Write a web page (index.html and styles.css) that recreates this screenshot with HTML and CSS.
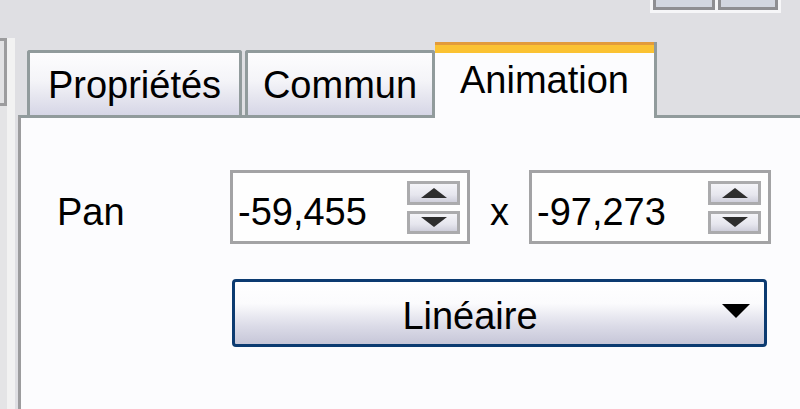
FILE: index.html
```html
<!DOCTYPE html>
<html lang="fr">
<head>
<meta charset="utf-8">
<title>Animation</title>
<link rel="stylesheet" href="styles.css">
</head>
<body>
<div class="top">
  <div class="winbtns">
    <div class="winbtn"></div>
    <div class="winbtn"></div>
  </div>
</div>
<div class="workspace">
  <div class="gutter">
    <div class="sidebox"></div>
  </div>
  <div class="tabpane">
    <div class="tabs">
      <div class="tab tab-first">Propriétés</div>
      <div class="tab tab-second">Commun</div>
      <div class="tab tab-active">Animation</div>
    </div>
    <div class="panel">
      <div class="row">
        <div class="label">Pan</div>
        <div class="spinbox">
          <span class="value">-59,455</span>
          <div class="spin">
            <div class="spinbtn"><svg width="26" height="10" viewBox="0 0 26 10"><path d="M13 0 L26 10 L0 10 Z" fill="#2e2e2e"/></svg></div>
            <div class="spinbtn"><svg width="26" height="10" viewBox="0 0 26 10"><path d="M0 0 L26 0 L13 10 Z" fill="#2e2e2e"/></svg></div>
          </div>
        </div>
        <div class="times">x</div>
        <div class="spinbox spinbox-wide">
          <span class="value">-97,273</span>
          <div class="spin">
            <div class="spinbtn"><svg width="26" height="10" viewBox="0 0 26 10"><path d="M13 0 L26 10 L0 10 Z" fill="#2e2e2e"/></svg></div>
            <div class="spinbtn"><svg width="26" height="10" viewBox="0 0 26 10"><path d="M0 0 L26 0 L13 10 Z" fill="#2e2e2e"/></svg></div>
          </div>
        </div>
      </div>
      <div class="select">
        <span class="select-text">Linéaire</span>
        <span class="select-arrow"><svg width="28" height="14" viewBox="0 0 28 14"><path d="M0 0 L28 0 L14 14 Z" fill="#000"/></svg></span>
      </div>
    </div>
  </div>
</div>
</body>
</html>
```

FILE: styles.css
```css
html, body {
  margin: 0;
  padding: 0;
}
body {
  width: 800px;
  height: 409px;
  overflow: hidden;
  background: #dfdfe3;
  font-family: "Liberation Sans", Arial, sans-serif;
  font-size: 38px;
  color: #000;
  display: flex;
  flex-direction: column;
}
.top {
  height: 38px;
  display: flex;
  justify-content: flex-end;
  align-items: flex-start;
  padding-right: 19px;
}
.winbtns {
  margin-top: -4px;
  display: flex;
  gap: 3px;
  background: #f6f6f8;
  padding: 0 3px 3px 3px;
}
.winbtn {
  width: 56px;
  height: 11px;
  background: #d2d6e0;
  border: 3px solid #8e8e92;
  border-top: none;
}
.winbtn + .winbtn {
  width: 54px;
}
.workspace {
  flex: 1;
  display: flex;
}
.gutter {
  width: 18px;
  display: flex;
  flex-direction: column;
  background: linear-gradient(90deg, #e4e4e6 0, #e4e4e6 7px, #f2f2f2 7px, #f2f2f2 15px, #dfdfe3 15px);
}
.sidebox {
  width: 4px;
  height: 62px;
  border: 3px solid #9c9c9e;
  border-left: none;
  background: #e2e2e4;
}
.tabpane {
  flex: 1;
  display: flex;
  flex-direction: column;
  padding-top: 4px;
}
.tabs {
  display: flex;
  align-items: flex-end;
  padding-left: 9px;
  height: 73px;
  position: relative;
  z-index: 1;
}
.tab {
  box-sizing: border-box;
  height: 65px;
  border: 3px solid #919b9c;
  border-bottom: none;
  border-radius: 3px 3px 0 0;
  background: linear-gradient(180deg, #fdfdfe 0%, #f4f4f8 45%, #d6d6e6 100%);
  text-align: center;
  line-height: 46px;
  padding-top: 9px;
  white-space: nowrap;
}
.tab-first {
  width: 215px;
}
.tab-second {
  width: 190px;
  margin-left: 3px;
}
.tab-active {
  width: 222px;
  height: 76px;
  margin-bottom: -3px;
  border: none;
  border-right: 3px solid #919b9c;
  border-radius: 0;
  background: #fcfcfe;
  box-shadow: inset 0 3px 0 #e39b3a, inset 0 11px 0 #fbc232;
  padding-top: 15px;
}
.panel {
  flex: 1;
  background: #fcfcfe;
  border-top: 3px solid #919b9c;
  border-left: 3px solid #9c9c9e;
  padding: 52px 0 0 36px;
  display: flex;
  flex-direction: column;
}
.row {
  display: flex;
  align-items: flex-start;
}
.label {
  width: 173px;
  line-height: 46px;
  padding-top: 19px;
}
.spinbox {
  box-sizing: border-box;
  width: 240px;
  height: 74px;
  border: 3px solid #a3a3a5;
  background: #fefefe;
  display: flex;
  justify-content: space-between;
  padding: 8px 7px 7px 5px;
}
.spinbox-wide {
  width: 242px;
}
.value {
  line-height: 46px;
  padding-top: 8px;
}
.spin {
  display: flex;
  flex-direction: column;
  gap: 6px;
}
.spinbtn {
  box-sizing: border-box;
  width: 53px;
  height: 24px;
  border: 3px solid #ababad;
  background: linear-gradient(180deg, #f4f4f8 0%, #e6e6ee 60%, #cfcfdb 100%);
  display: flex;
  align-items: center;
  justify-content: center;
}
.times {
  width: 59px;
  text-align: center;
  line-height: 46px;
  padding-top: 19px;
}
.select {
  box-sizing: border-box;
  margin-top: 35px;
  margin-left: 175px;
  width: 535px;
  height: 68px;
  border: 3px solid #0c3b71;
  border-radius: 4px;
  background: linear-gradient(180deg, #ffffff 0%, #fbfbfd 35%, #dcdce8 70%, #c6c6d8 100%);
  display: flex;
  align-items: flex-start;
}
.select-text {
  flex: 1;
  text-align: center;
  line-height: 46px;
  padding-top: 11px;
}
.select-arrow {
  width: 59px;
  padding: 22px 0 0 17px;
  box-sizing: border-box;
  display: flex;
}
```
